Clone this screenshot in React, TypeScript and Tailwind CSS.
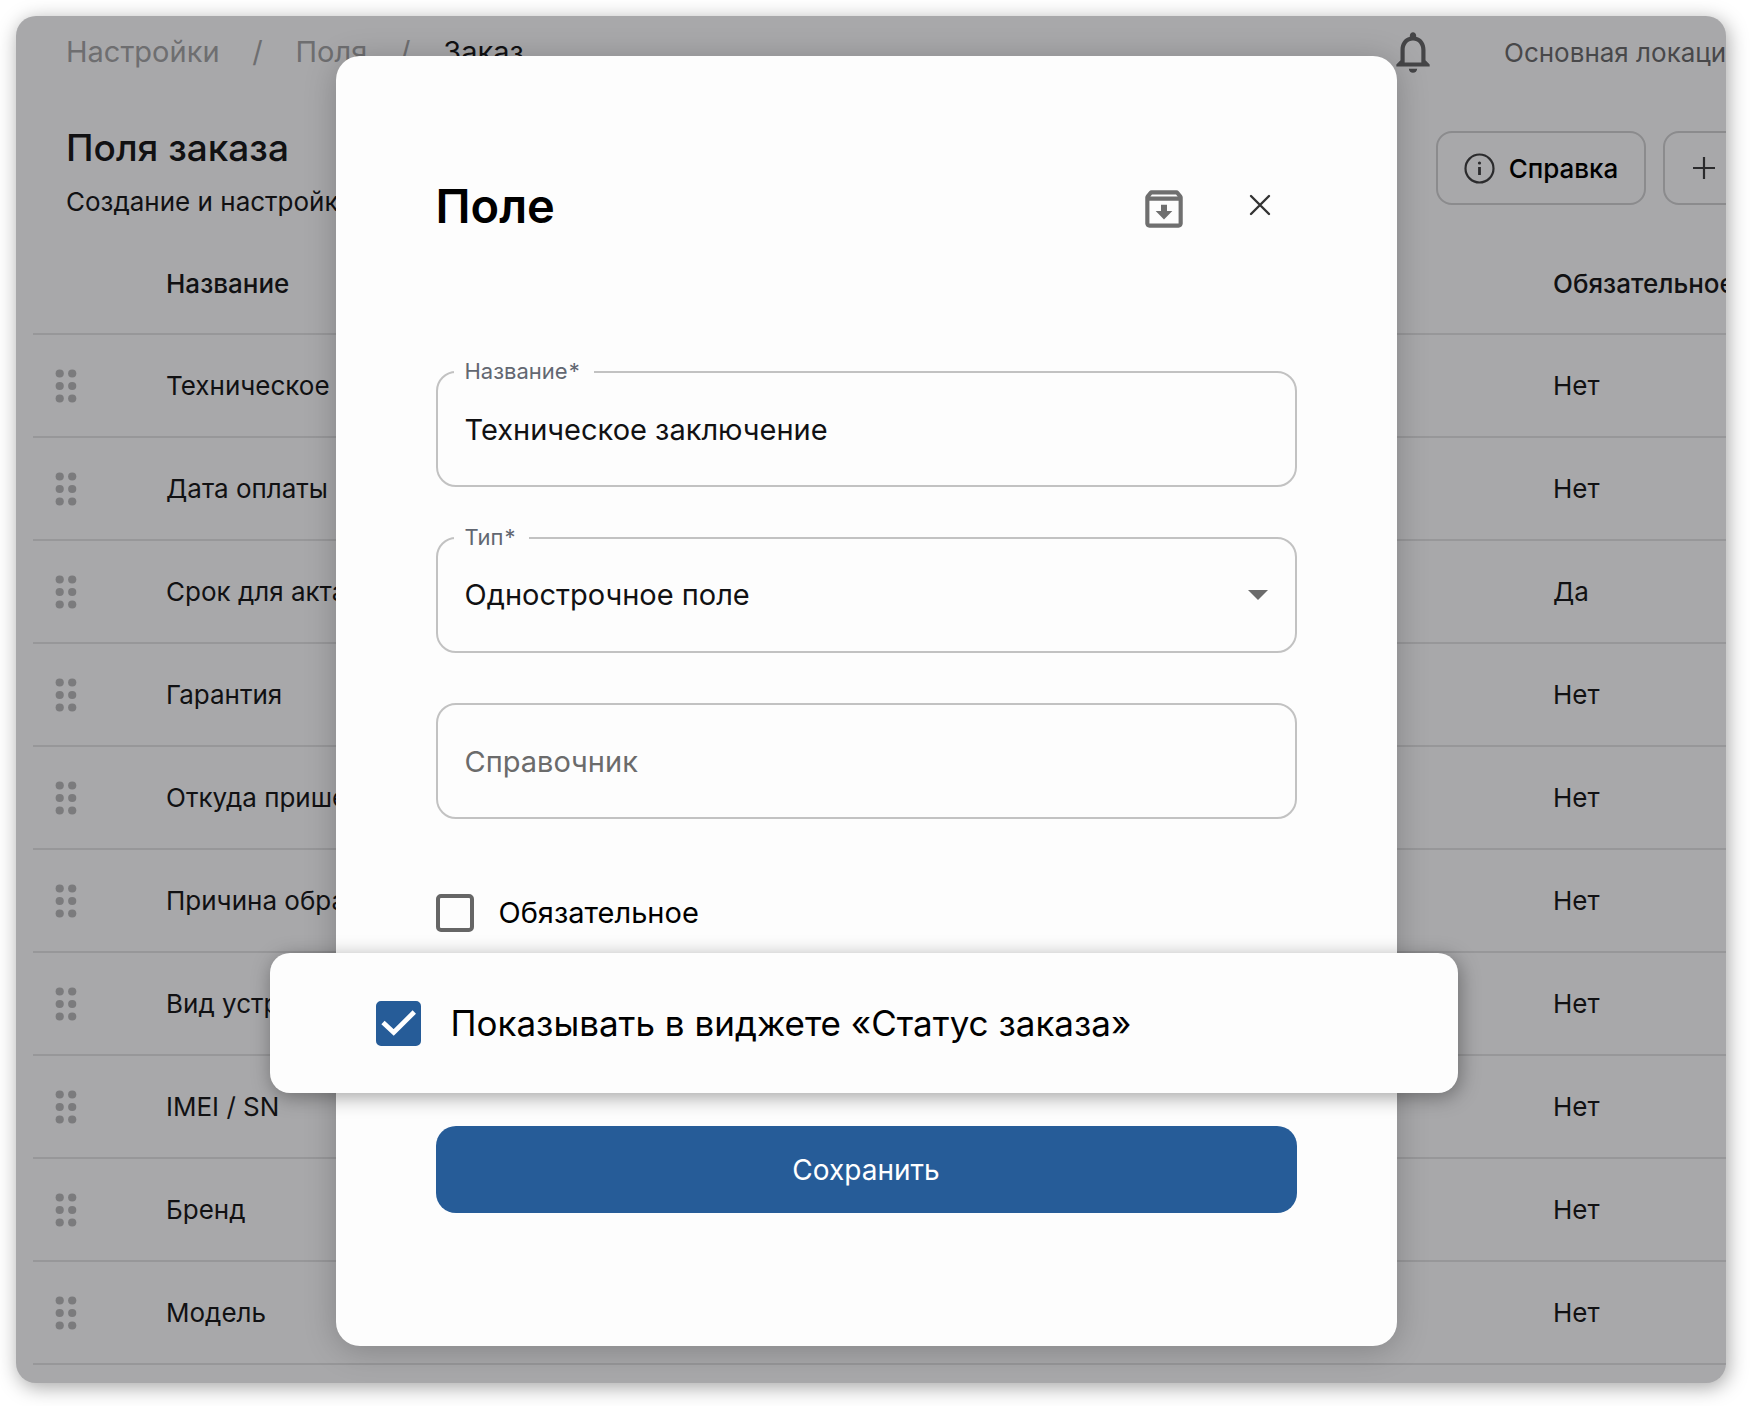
import { useId } from "react";
import { MdNotificationsNone, MdOutlineArchive } from "react-icons/md";

type Row = { name: string; required: boolean };

const rows: Row[] = [
  { name: "Техническое заключение", required: false },
  { name: "Дата оплаты", required: false },
  { name: "Срок для акта", required: true },
  { name: "Гарантия", required: false },
  { name: "Откуда пришел", required: false },
  { name: "Причина обращения", required: false },
  { name: "Вид устройства", required: false },
  { name: "IMEI / SN", required: false },
  { name: "Бренд", required: false },
  { name: "Модель", required: false },
];

function GripIcon() {
  return (
    <svg width="22" height="34" viewBox="0 0 22 34" fill="#7b7b7d" aria-hidden="true">
      {[4.5, 17, 29.5].map((y) => (
        <g key={y}>
          <circle cx="4.7" cy={y} r="4.1" />
          <circle cx="17.2" cy={y} r="4.1" />
        </g>
      ))}
    </svg>
  );
}

function Topbar() {
  return (
    <header className="flex h-[72px] items-center justify-between pl-[50px]">
      <nav className="flex items-center text-[29px] text-[#6e6e70]">
        <a href="#settings">Настройки</a>
        <span className="w-[76px] text-center">/</span>
        <a href="#fields">Поля</a>
        <span className="w-[76px] text-center">/</span>
        <a href="#order" className="text-[#111113]">
          Заказ
        </a>
      </nav>
      <div className="flex items-center">
        <button type="button" aria-label="Уведомления" className="mr-[66px] text-[#454547]">
          <MdNotificationsNone size={50} />
        </button>
        <span className="w-[278px] text-[26px] whitespace-nowrap text-[#48484a]">Основная локация</span>
      </div>
    </header>
  );
}

function PageTitle() {
  return (
    <div className="flex justify-between pt-9 pb-4 pl-[50px]">
      <div>
        <h1 className="text-[37px] leading-[48px] font-medium">Поля заказа</h1>
        <p className="mt-3.5 text-[26px] leading-8 whitespace-nowrap">Создание и настройка полей</p>
      </div>
      <div className="mt-[7px] flex h-[74px] gap-[17px]">
        <button
          type="button"
          className="flex w-[210px] items-center justify-center gap-3.5 rounded-2xl border-2 border-[#8b8b8d] text-[26px] font-medium text-black"
        >
          <svg width="31" height="31" viewBox="0 0 31 31" fill="none" stroke="#2b2b2d" strokeWidth="2.2" aria-hidden="true">
            <circle cx="15.5" cy="15.5" r="14" />
            <path d="M15.5 14v8" strokeWidth="2.8" />
            <circle cx="15.5" cy="10" r="1.6" fill="#2b2b2d" stroke="none" />
          </svg>
          Справка
        </button>
        <button
          type="button"
          aria-label="Добавить"
          className="flex w-[119px] items-center rounded-2xl border-2 border-[#8b8b8d] pl-[27px]"
        >
          <svg width="24" height="24" viewBox="0 0 24 24" stroke="#2b2b2d" strokeWidth="2.2" aria-hidden="true">
            <path d="M12 1v22M1 12h22" />
          </svg>
        </button>
      </div>
    </div>
  );
}

function FieldsTable() {
  return (
    <div className="pl-[17px]">
      <table className="w-full table-fixed text-left text-[26px]">
        <thead>
          <tr className="h-[100px] border-b-2 border-[#979799]">
            <th className="w-[133px]" />
            <th className="font-medium">Название</th>
            <th className="w-[229px] font-medium whitespace-nowrap">Обязательное</th>
          </tr>
        </thead>
        <tbody>
          {rows.map((row) => (
            <tr key={row.name} className="h-[103px] border-b-2 border-[#979799]">
              <td className="pl-[22px]">
                <GripIcon />
              </td>
              <td>{row.name}</td>
              <td>{row.required ? "Да" : "Нет"}</td>
            </tr>
          ))}
        </tbody>
      </table>
    </div>
  );
}

const control =
  "h-[116px] w-full appearance-none rounded-[20px] border-2 border-[#c2c2c2] bg-transparent px-[27px] text-[29px] text-[#111113] outline-none placeholder:text-[#6b6b6b] placeholder:opacity-100";

function FieldLabel({ id, text }: { id: string; text: string }) {
  return (
    <label
      htmlFor={id}
      className="absolute -top-3.5 left-[18px] bg-[#fdfdfd] pr-3.5 pl-[11px] text-[22px] leading-7 text-[#626771]"
    >
      {text}
      <span className="ml-px">*</span>
    </label>
  );
}

function Tick({ label, checked, large }: { label: string; checked?: boolean; large?: boolean }) {
  const size = large ? "size-[45px]" : "size-[38px]";
  return (
    <label className={large ? "flex items-center gap-[30px] text-[35px]" : "flex items-center gap-[25px] text-[29px]"}>
      <span className={`grid shrink-0 place-items-center ${size}`}>
        <input
          type="checkbox"
          defaultChecked={checked}
          className="peer col-start-1 row-start-1 size-full appearance-none rounded-[5px] border-4 border-[#666666] checked:border-[#265c98] checked:bg-[#265c98]"
        />
        <svg
          viewBox="0 0 45 45"
          fill="none"
          stroke="white"
          strokeWidth="4.8"
          className="pointer-events-none invisible col-start-1 row-start-1 size-full peer-checked:visible"
          aria-hidden="true"
        >
          <path d="M7 21.5 17.7 31.5 38.3 11" />
        </svg>
      </span>
      {label}
    </label>
  );
}

function FieldDialog() {
  const id = useId();

  return (
    <form
      role="dialog"
      aria-label="Поле"
      className="w-[1061px] rounded-3xl bg-[#fdfdfd] px-[100px] pt-[114px] pb-[133px] text-black shadow-[0_4px_32px_rgba(0,0,0,0.22)]"
    >
      <div className="flex h-[72px] items-center">
        <h2 className="mr-auto text-[47px] font-semibold">Поле</h2>
        <button type="button" aria-label="В архив" className="mr-[60px] pt-1.5 text-[#6f6f6f]">
          <MdOutlineArchive size={50} />
        </button>
        <button type="button" aria-label="Закрыть" className="mr-[26px] pb-0.5">
          <svg width="22" height="22" viewBox="0 0 22 22" stroke="#333333" strokeWidth="2.4" strokeLinecap="round" aria-hidden="true">
            <path d="M2 2 20 20M20 2 2 20" />
          </svg>
        </button>
      </div>

      <div className="mt-[129px] flex flex-col gap-[50px]">
        <div className="relative">
          <input id={`${id}-name`} type="text" defaultValue="Техническое заключение" className={control} />
          <FieldLabel id={`${id}-name`} text="Название" />
        </div>
        <div className="relative">
          <select id={`${id}-type`} className={control}>
            <option>Однострочное поле</option>
          </select>
          <FieldLabel id={`${id}-type`} text="Тип" />
          <svg
            width="20"
            height="10"
            viewBox="0 0 20 10"
            fill="#6b6b6b"
            className="pointer-events-none absolute top-[53px] right-[29px]"
            aria-hidden="true"
          >
            <path d="M0 0h20L10 10z" />
          </svg>
        </div>
        <input type="text" aria-label="Справочник" placeholder="Справочник" className={control} />
      </div>

      <div className="mt-[74px] flex h-10 items-center">
        <Tick label="Обязательное" />
      </div>

      {/* Highlighted option, wider than the dialog itself */}
      <div className="mt-5 -mr-[161px] -ml-[166px] flex h-[140px] items-center rounded-[20px] bg-[#fdfdfd] pl-[106px] shadow-[2px_4px_20px_rgba(0,0,0,0.36)]">
        <Tick label="Показывать в виджете «Статус заказа»" checked large />
      </div>

      <button type="submit" className="mt-[33px] h-[87px] w-full rounded-[20px] bg-[#265c98] text-[28px] text-white">
        Сохранить
      </button>
    </form>
  );
}

export default function App() {
  return (
    <div className="bg-white pt-4 pr-6 pb-6 pl-4 font-['Inter','Liberation_Sans',sans-serif]">
      <div className="relative overflow-hidden rounded-[20px] bg-[#a8a8aa] pb-[18px] text-[#111113] shadow-[2px_4px_20px_rgba(0,0,0,0.36)]">
        {/* The page runs past the right edge of the frame */}
        <div className="-mr-14">
          <Topbar />
          <PageTitle />
          <FieldsTable />
        </div>
        <div className="absolute inset-0 flex items-start justify-center pt-10 pr-2.5">
          <FieldDialog />
        </div>
      </div>
    </div>
  );
}
